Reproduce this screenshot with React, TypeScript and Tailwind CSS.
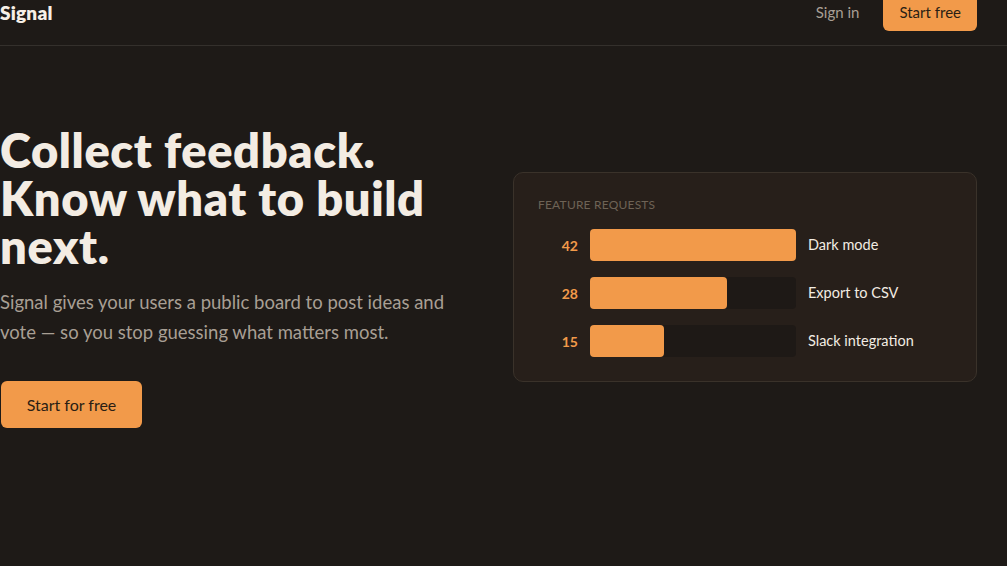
import React from 'react';

const requests = [
  { votes: 42, label: 'Dark mode' },
  { votes: 28, label: 'Export to CSV' },
  { votes: 15, label: 'Slack integration' },
];

const maxVotes = 42;

const App: React.FC = () => {
  return (
    <div className="min-h-[566px] bg-[#1e1a17] font-['Lato',sans-serif] text-[#f3ece3]">
      {/* Header */}
      <header className="flex h-[46px] items-start justify-between border-b border-[#34302c] pr-[30px]">
        <div className="pt-[1px] text-[19px] font-extrabold leading-[24px] tracking-[0.2px] text-[#f6efe6]">Signal</div>
        <nav className="flex items-start gap-6">
          <a className="pt-[3px] text-[15px] leading-[18px] text-[#a89f94]">Sign in</a>
          <button className="-mt-[8px] rounded-md bg-[#f29a4a] px-4 pb-[10px] pt-[11px] text-[15px] leading-[18px] text-[#2a1e14]">
            Start free
          </button>
        </nav>
      </header>

      {/* Hero */}
      <main className="flex items-start justify-between pr-[30px] pt-[80px]">
        <div className="w-[470px]">
          <h1 className="text-[47px] font-extrabold leading-[48px] tracking-[0.6px] text-[#f3ece3]">
            Collect feedback.
            <br />
            Know what to build
            <br />
            next.
          </h1>
          <p className="mt-[17px] w-[458px] text-[18.5px] leading-[30px] text-[#a89f94]">
            Signal gives your users a public board to post ideas and vote — so you stop guessing what matters most.
          </p>
          <button className="ml-px mt-[34px] h-[47px] w-[141px] rounded-md bg-[#f29a4a] text-[16px] text-[#2a1e14]">
            Start for free
          </button>
        </div>

        <div className="mt-[46px] w-[464px] rounded-[10px] border border-[#3a322a] bg-[#271f1a] px-6 pb-[24px] pt-[24px]">
          <div className="text-[12px] uppercase leading-[16px] tracking-[0.2px] text-[#6e6356]">Feature requests</div>
          <div className="mt-4 flex flex-col gap-4">
            {requests.map((r) => (
              <div key={r.label} className="flex items-center gap-3">
                <span className="w-10 text-right text-[14px] font-bold text-[#f29a4a]">{r.votes}</span>
                <div className="h-8 w-[206px] rounded-[4px] bg-[#1e1916]">
                  <div
                    className="h-full rounded-[4px] bg-[#f29a4a]"
                    style={{ width: `${(r.votes / maxVotes) * 100}%` }}
                  />
                </div>
                <span className="text-[14.5px] text-[#f3ece3]">{r.label}</span>
              </div>
            ))}
          </div>
        </div>
      </main>
    </div>
  );
};

export default App;
